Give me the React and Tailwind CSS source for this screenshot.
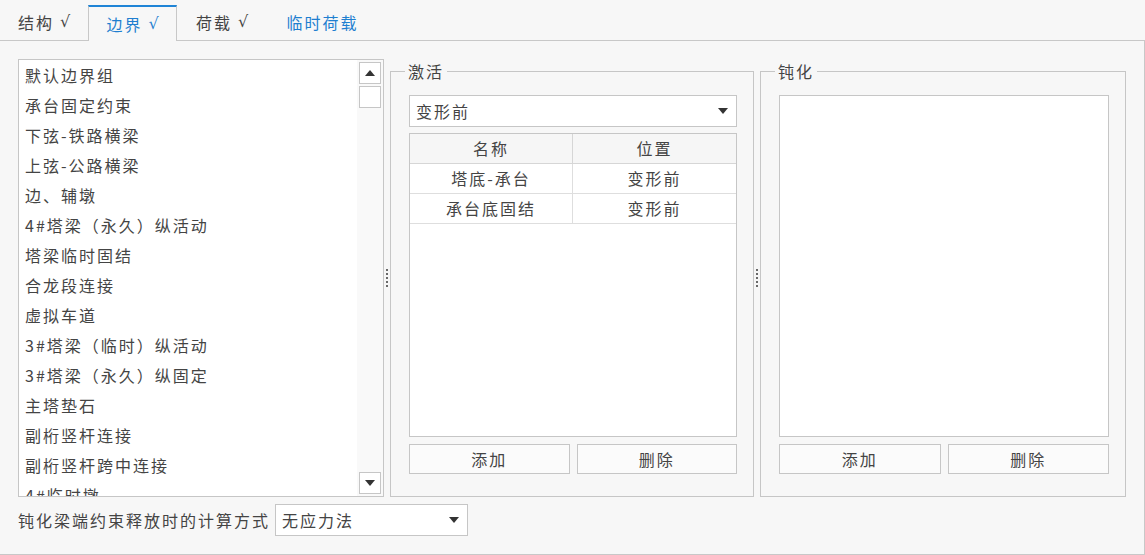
import React from "react";

const FONT = { fontFamily: '"Noto Sans CJK SC", "Noto Sans", sans-serif' };

const tabs = [
  { label: "结构", w: "w-[88px]" },
  { label: "边界", w: "w-[89px]", active: true },
  { label: "荷载", w: "w-[90px]" },
  { label: "临时荷载", w: "w-[111px]", blue: true, plain: true },
];

const groups = [
  "默认边界组",
  "承台固定约束",
  "下弦-铁路横梁",
  "上弦-公路横梁",
  "边、辅墩",
  "4#塔梁（永久）纵活动",
  "塔梁临时固结",
  "合龙段连接",
  "虚拟车道",
  "3#塔梁（临时）纵活动",
  "3#塔梁（永久）纵固定",
  "主塔垫石",
  "副桁竖杆连接",
  "副桁竖杆跨中连接",
  "4#临时墩",
];

function Caret({ up }) {
  return (
    <svg width="10" height="6" viewBox="0 0 10 6" className="block">
      {up ? <path d="M0 6 L5 0 L10 6 Z" fill="#333" /> : <path d="M0 0 L10 0 L5 6 Z" fill="#333" />}
    </svg>
  );
}

function Select({ value, className }) {
  return (
    <div className={`flex items-center justify-between bg-white border border-[#c6c6c6] pl-[6px] pr-[8px] ${className}`}>
      <span>{value}</span>
      <Caret />
    </div>
  );
}

function Splitter() {
  return (
    <div className="w-[6px] flex items-center justify-center">
      <div className="w-[2px] h-[18px] border-l-2 border-dotted border-[#6a6a6a]" />
    </div>
  );
}

function Buttons() {
  return (
    <div className="flex gap-[7px] mt-[7px]">
      <button className="flex-1 h-[30px] bg-[#fbfbfb] border border-[#c6c6c6] text-[#444]">添加</button>
      <button className="flex-1 h-[30px] bg-[#fbfbfb] border border-[#c6c6c6] text-[#444]">删除</button>
    </div>
  );
}

function Group({ title, children, className }) {
  return (
    <fieldset className={`border border-[#c6c6c6] pl-[18px] pr-[16px] pb-[21px] min-w-0 h-[438px] ${className}`}>
      <legend className="-ml-[4px] px-[3px] leading-[24px] text-[#444]">{title}</legend>
      <div className="flex flex-col h-[391px]">{children}</div>
    </fieldset>
  );
}

// narrow check mark used in the tab captions
function Check() {
  return (
    <span
      className="inline-block ml-[6px] tracking-normal"
      style={{ fontFamily: '"DejaVu Sans", sans-serif', fontSize: "16px" }}
    >
      √
    </span>
  );
}

export default function App() {
  return (
    <div className="w-[1145px] h-[555px] bg-[#f7f7f7] text-[16px] tracking-[2px] text-[#444] overflow-hidden" style={FONT}>
      {/* tab strip */}
      <div className="flex h-[41px] items-end border-b border-[#c8c8c8]">
        {tabs.map((t) =>
          t.active ? (
            <div
              key={t.label}
              className={`${t.w} h-[36px] -mb-px flex items-center justify-center bg-[#f7f7f7] border-x border-[#c8c8c8] border-t-2 border-t-[#1f84d6] text-[#1f7fd0]`}
            >
              {t.label}
              <Check />
            </div>
          ) : (
            <div
              key={t.label}
              className={`${t.w} h-[36px] flex items-center justify-center ${t.blue ? "text-[#1f7fd0]" : "text-[#444]"}`}
            >
              {t.label}
              {!t.plain && <Check />}
            </div>
          )
        )}
      </div>

      {/* page body */}
      <div className="h-[514px] border-r border-b border-[#c8c8c8] pl-[18px] pr-[17px] pt-[18px]">
        <div className="flex h-[438px]">
          {/* boundary group list */}
          <div className="w-[366px] h-full flex bg-white border border-[#c6c6c6] overflow-hidden">
            <div className="flex-1 pl-[6px] overflow-hidden">
              {groups.map((g) => (
                <div key={g} className="h-[30px] leading-[30px] whitespace-nowrap">
                  {g}
                </div>
              ))}
            </div>
            <div className="w-[26px] bg-[#f9f9f9] flex flex-col items-center py-[2px]">
              <div className="w-[22px] h-[22px] bg-white border border-[#c6c6c6] flex items-center justify-center">
                <Caret up />
              </div>
              <div className="w-[22px] h-[22px] mt-[2px] bg-white border border-[#c6c6c6]" />
              <div className="flex-1" />
              <div className="w-[22px] h-[22px] bg-white border border-[#c6c6c6] flex items-center justify-center">
                <Caret />
              </div>
            </div>
          </div>

          <Splitter />

          {/* activation */}
          <Group title="激活" className="w-[364px]">
            <Select value="变形前" className="h-[32px] mt-[12px] shrink-0" />
            <div className="flex-1 mt-[6px] bg-white border border-[#c6c6c6] overflow-hidden">
              <div className="grid grid-cols-2 h-[30px] bg-[#f6f6f6] border-b border-[#d6d6d6] text-center leading-[29px]">
                <div className="border-r border-[#d6d6d6]">名称</div>
                <div>位置</div>
              </div>
              {[
                ["塔底-承台", "变形前"],
                ["承台底固结", "变形前"],
              ].map(([a, b]) => (
                <div key={a} className="grid grid-cols-2 h-[30px] border-b border-[#dedede] text-center leading-[29px]">
                  <div className="border-r border-[#dedede]">{a}</div>
                  <div>{b}</div>
                </div>
              ))}
            </div>
            <Buttons />
          </Group>

          <Splitter />

          {/* deactivation */}
          <Group title="钝化" className="w-[366px]">
            <div className="flex-1 mt-[12px] bg-white border border-[#c6c6c6]" />
            <Buttons />
          </Group>
        </div>

        {/* release method */}
        <div className="flex items-center mt-[7px] h-[32px]">
          <span className="whitespace-nowrap">钝化梁端约束释放时的计算方式</span>
          <Select value="无应力法" className="w-[193px] h-[32px] ml-[5px]" />
        </div>
      </div>
    </div>
  );
}
